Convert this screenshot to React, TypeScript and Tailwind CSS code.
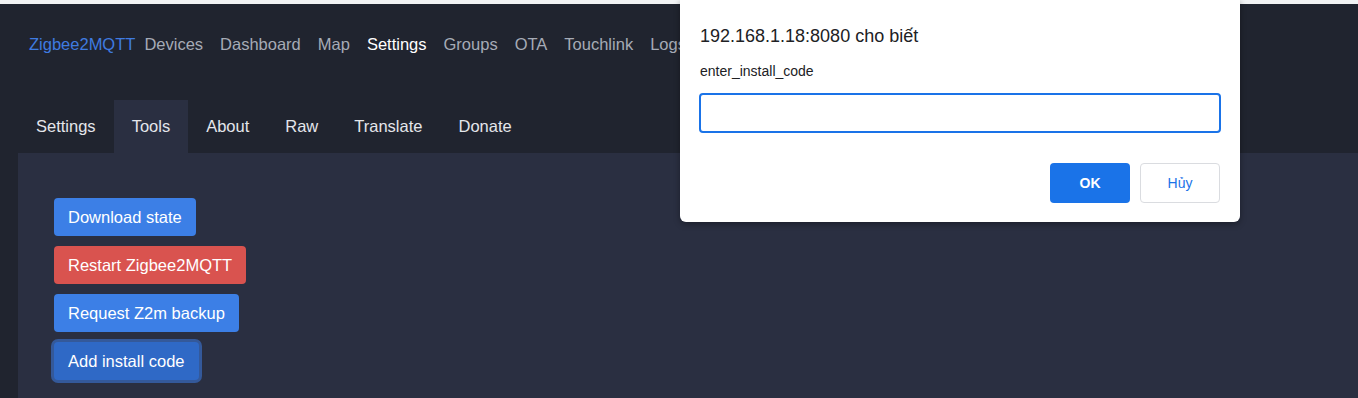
import React from "react";

const navItems = ["Devices", "Dashboard", "Map", "Settings", "Groups", "OTA", "Touchlink", "Logs"];
const tabs = ["Settings", "Tools", "About", "Raw", "Translate", "Donate"];

function Btn({ label, color }: { label: string; color: string }) {
  return (
    <button className={`h-[38px] px-[14px] rounded-[4px] text-[16.5px] text-white text-left ${color}`}>
      {label}
    </button>
  );
}

function PromptDialog() {
  return (
    <div className="absolute left-[680px] top-0 w-[560px] h-[222px] bg-white rounded-b-[6px] shadow-[0_2px_6px_rgba(0,0,0,0.35)] px-[20px] pt-[24px] font-['Liberation_Sans',sans-serif]">
      <div className="text-[18px] leading-[24px] text-[#202124]">192.168.1.18:8080 cho biết</div>
      <div className="mt-[14px] text-[14px] leading-[18px] text-[#202124]">enter_install_code</div>
      <div className="mt-[13px] h-[40px] w-[522px] -ml-[1px] rounded-[4px] border-2 border-[#1a73e8]" />
      <div className="mt-[30px] flex justify-end gap-[10px]">
        <button className="w-[80px] h-[40px] rounded-[4px] bg-[#1a73e8] text-white text-[14px] font-bold">OK</button>
        <button className="w-[80px] h-[40px] rounded-[4px] bg-white border border-[#dadce0] text-[#1a73e8] text-[14px]">Hủy</button>
      </div>
    </div>
  );
}

export default function App() {
  return (
    <div className="relative w-[1358px] h-[398px] overflow-hidden bg-[#20242f] font-['Liberation_Sans',sans-serif]">
      <div className="h-[4px] bg-[#f1f3f4]" />
      <nav className="flex items-center h-[80px] w-[680px] overflow-hidden pl-[29px] text-[16.5px] whitespace-nowrap">
        <span className="text-[#3f7be0] mr-[9px]">Zigbee2MQTT</span>
        <div className="flex gap-[17px]">
          {navItems.map((n) => (
            <span key={n} className={n === "Settings" ? "text-white" : "text-[#a6abb6]"}>
              {n}
            </span>
          ))}
        </div>
      </nav>
      <div className="ml-[18px] mt-[16px]">
        <div className="flex h-[53px]">
          {tabs.map((t) => (
            <div
              key={t}
              className={`flex items-center px-[18px] text-[16.5px] text-[#e4e6eb] ${
                t === "Tools" ? "bg-[#2a2f41]" : ""
              }`}
            >
              {t}
            </div>
          ))}
        </div>
        <div className="bg-[#2a2f41] h-[300px] pl-[36px] pt-[45px] flex flex-col items-start gap-[10px]">
          <Btn label="Download state" color="bg-[#3c7fe6]" />
          <Btn label="Restart Zigbee2MQTT" color="bg-[#d9534f]" />
          <Btn label="Request Z2m backup" color="bg-[#3c7fe6]" />
          <button className="h-[38px] px-[14px] rounded-[4px] text-[16.5px] text-white bg-[#2f69c6] ring-[3px] ring-[#34599a]">
            Add install code
          </button>
        </div>
      </div>
      <PromptDialog />
    </div>
  );
}
